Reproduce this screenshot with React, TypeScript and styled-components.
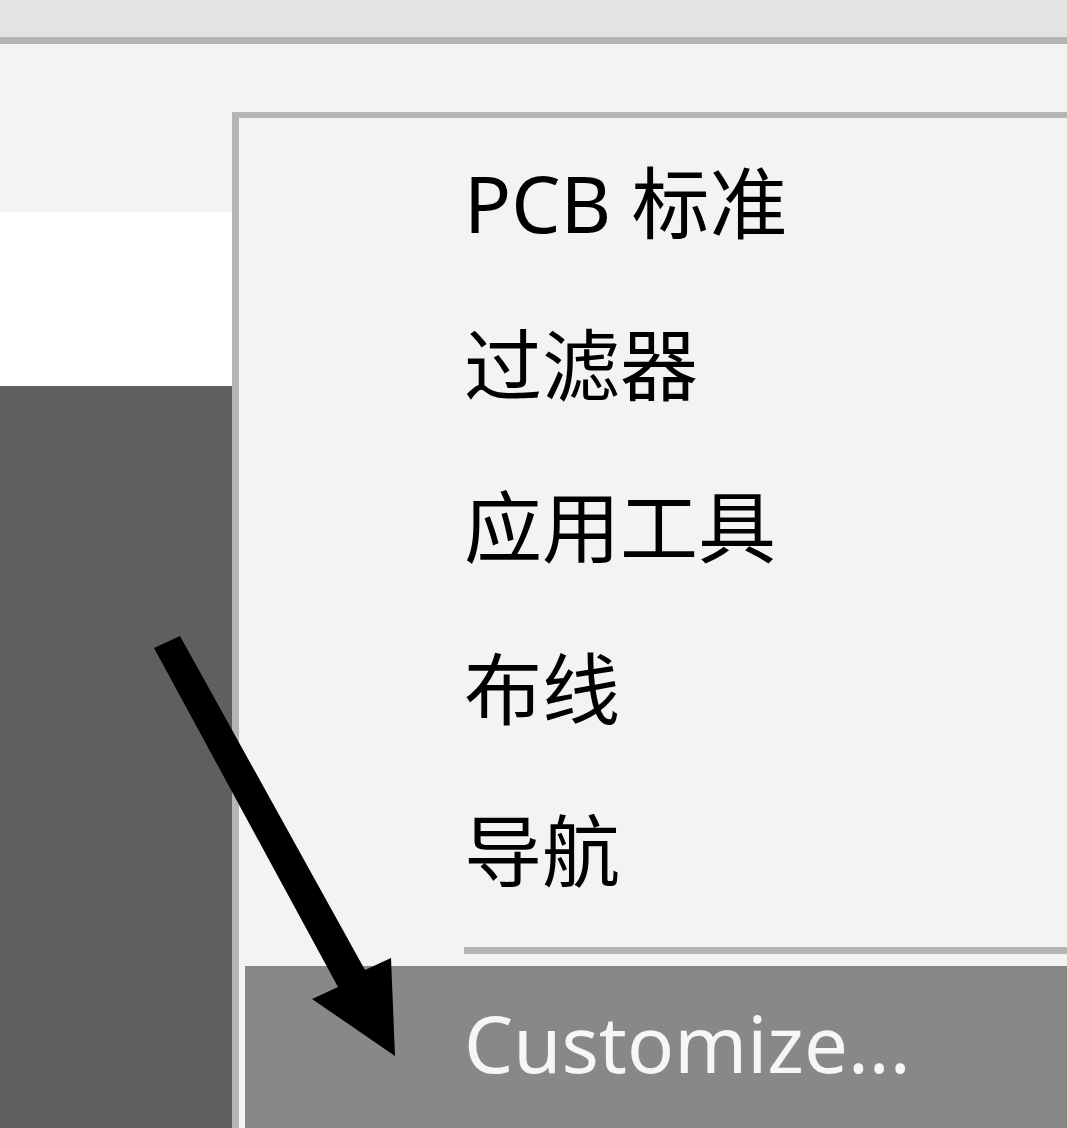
import styled, { createGlobalStyle } from 'styled-components';

const Global = createGlobalStyle`
  html, body {
    margin: 0;
    padding: 0;
    background: #f3f3f3;
    overflow: hidden;
  }
  body {
    font-family: 'Noto Sans', 'Noto Sans CJK SC', sans-serif;
  }
`;

const Screen = styled.div`
  position: relative;
  width: 1067px;
  height: 1128px;
  display: flex;
  flex-direction: column;
  overflow: hidden;
  background: #f3f3f3;
`;

const TitleBar = styled.div`
  height: 37px;
  background: #e3e3e3;
  border-bottom: 7px solid #b5b5b5;
  flex-shrink: 0;
`;

const Body = styled.div`
  flex: 1;
  display: flex;
  min-height: 0;
`;

const LeftPane = styled.div`
  width: 232px;
  flex-shrink: 0;
  display: flex;
  flex-direction: column;
`;

const Band = styled.div<{ $h?: number; $bg: string }>`
  background: ${(p) => p.$bg};
  ${(p) => (p.$h ? `height: ${p.$h}px;` : 'flex: 1;')}
`;

const Menu = styled.div`
  flex: 1;
  margin-top: 68px;
  border-left: 7px solid #b5b5b5;
  border-top: 6px solid #b5b5b5;
  background: #f3f3f3;
  padding: 0 0 0 6px;
  display: flex;
  flex-direction: column;
`;

const Item = styled.div<{ $active?: boolean }>`
  height: ${(p) => (p.$active ? 176 : 162)}px;
  flex-shrink: 0;
  display: flex;
  align-items: center;
  padding-left: 219px;
  padding-bottom: ${(p) => (p.$active ? 22 : 0)}px;
  box-sizing: border-box;
  font-size: 78px;
  color: ${(p) => (p.$active ? '#f6f6f6' : '#000')};
  background: ${(p) => (p.$active ? '#888888' : 'transparent')};
  white-space: nowrap;
`;

const Separator = styled.div`
  height: 38px;
  flex-shrink: 0;
  margin-left: 219px;
  padding-top: 19px;
  box-sizing: border-box;
  &::after {
    content: '';
    display: block;
    width: 100%;
    height: 7px;
    background: #b5b5b5;
  }
`;

const Arrow = styled.svg`
  position: absolute;
  left: 0;
  top: 0;
  pointer-events: none;
`;

const items = ['PCB 标准', '过滤器', '应用工具', '布线', '导航'];

export default function App() {
  return (
    <Screen>
      <Global />
      <TitleBar />
      <Body>
        <LeftPane>
          <Band $h={168} $bg='#f3f3f3' />
          <Band $h={174} $bg='#ffffff' />
          <Band $bg='#5f5f5f' />
        </LeftPane>
        <Menu>
          {items.map((label) => (
            <Item key={label}>{label}</Item>
          ))}
          <Separator />
          <Item $active>Customize...</Item>
        </Menu>
      </Body>
      <Arrow width='1067' height='1128' viewBox='0 0 1067 1128'>
        <polygon
          points='154,648 180,636 365,970 391,958 395,1056 312,999 338,987'
          fill='#000'
        />
      </Arrow>
    </Screen>
  );
}
